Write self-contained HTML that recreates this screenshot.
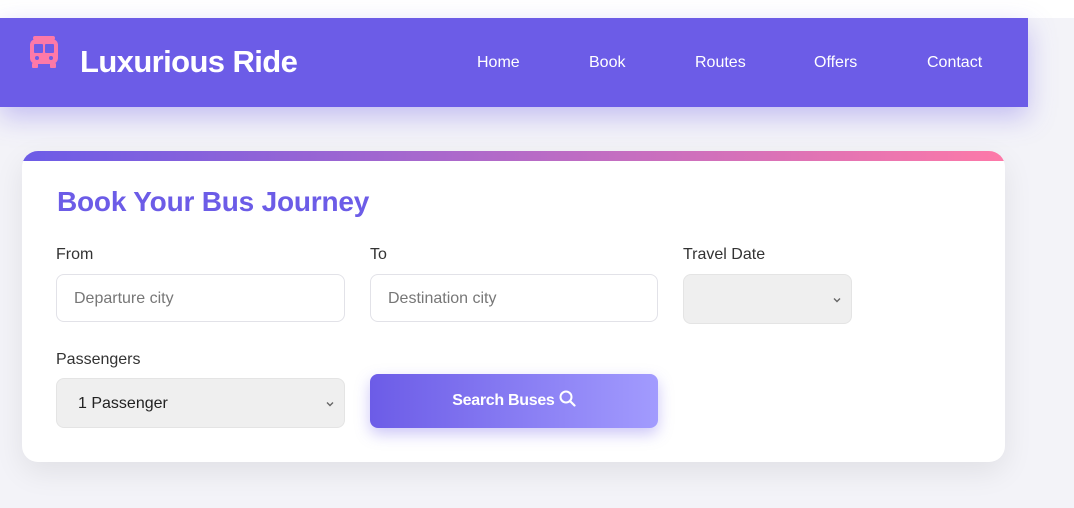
<!DOCTYPE html>
<html><head><meta charset="utf-8"><style>
*{box-sizing:border-box;margin:0;padding:0}
html,body{width:1074px;height:508px;overflow:hidden}
body{background:#f3f3f8;font-family:"Liberation Sans",sans-serif;position:relative}
.topw{position:absolute;left:0;top:0;width:1074px;height:18px;background:#fff}
.hdr{position:absolute;left:0;top:18px;width:1028px;height:89px;background:#6c5ce7;box-shadow:0 10px 25px rgba(108,92,231,.35)}
.logo{position:absolute;left:80px;top:26px;color:#fff;font-size:31px;font-weight:bold;letter-spacing:-0.6px}
.bus{position:absolute;left:27px;top:18px}
.nav a{position:absolute;top:36px;color:#fff;font-size:16px;text-decoration:none}
.card{position:absolute;left:22px;top:151px;width:983px;height:311px;background:#fff;border-radius:16px;overflow:hidden;box-shadow:0 10px 30px rgba(0,0,0,.08)}
.bar{height:10px;background:linear-gradient(90deg,#6c5ce7,#fd79a8)}
h2{position:absolute;left:35px;top:35px;color:#6c5ce7;font-size:28px;font-weight:bold;letter-spacing:-0.2px}
.lbl{position:absolute;font-size:16px;color:#333}
.in{position:absolute;height:48px;border:1px solid #e2e2e8;border-radius:8px;background:#fff;color:#777;font-size:16px;padding:15px 17px}
.sel{position:absolute;height:50px;border:1px solid #e4e4e4;border-radius:8px;background:#efefef;color:#222;font-size:16px;padding:16px 21px}
.chev{position:absolute;right:8px;top:19px}
.btn{position:absolute;left:348px;top:223px;width:288px;height:54px;border-radius:8px;background:linear-gradient(90deg,#6c5ce7,#a29bfe);color:#fff;font-weight:bold;font-size:16px;text-align:center;line-height:54px;box-shadow:0 6px 15px rgba(108,92,231,.35);letter-spacing:-0.3px}
</style></head><body>
<div class="topw"></div>
<div class="hdr">
<svg class="bus" width="34" height="34" viewBox="0 0 34 34"><rect x="3" y="3" width="28" height="25" rx="6" fill="#fd79a8"/><rect x="6" y="0" width="22" height="4" rx="2" fill="#fd79a8"/><rect x="7" y="8" width="9" height="9" rx="1" fill="#6c5ce7"/><rect x="18" y="8" width="9" height="9" rx="1" fill="#6c5ce7"/><circle cx="10" cy="22" r="2" fill="#6c5ce7"/><circle cx="24" cy="22" r="2" fill="#6c5ce7"/><rect x="5" y="27" width="6" height="5" rx="1" fill="#fd79a8"/><rect x="23" y="27" width="6" height="5" rx="1" fill="#fd79a8"/></svg>
<div class="logo">Luxurious Ride</div>
<div class="nav"><a style="left:477px">Home</a><a style="left:589px">Book</a><a style="left:695px">Routes</a><a style="left:814px">Offers</a><a style="left:927px">Contact</a></div>
</div>
<div class="card"><div class="bar"></div>
<h2>Book Your Bus Journey</h2>
<div class="lbl" style="left:34px;top:95px">From</div>
<div class="lbl" style="left:348px;top:95px">To</div>
<div class="lbl" style="left:661px;top:95px">Travel Date</div>
<div class="in" style="left:34px;top:123px;width:289px">Departure city</div>
<div class="in" style="left:348px;top:123px;width:288px">Destination city</div>
<div class="sel" style="left:661px;top:123px;width:169px"><svg class="chev" width="12" height="12" viewBox="0 0 12 12"><path d="M3 4.5l3 3 3-3" stroke="#666" stroke-width="1.4" fill="none"/></svg></div>
<div class="lbl" style="left:34px;top:200px">Passengers</div>
<div class="sel" style="left:34px;top:227px;width:289px">1 Passenger<svg class="chev" width="12" height="12" viewBox="0 0 12 12"><path d="M3 4.5l3 3 3-3" stroke="#666" stroke-width="1.4" fill="none"/></svg></div>
<div class="btn">Search Buses <svg width="17" height="17" viewBox="0 0 17 17" style="vertical-align:-2px"><circle cx="7" cy="7" r="5.5" stroke="#fff" stroke-width="2" fill="none"/><path d="M11 11l4.5 4.5" stroke="#fff" stroke-width="2.2" stroke-linecap="round"/></svg></div>
</div>
</body></html>
